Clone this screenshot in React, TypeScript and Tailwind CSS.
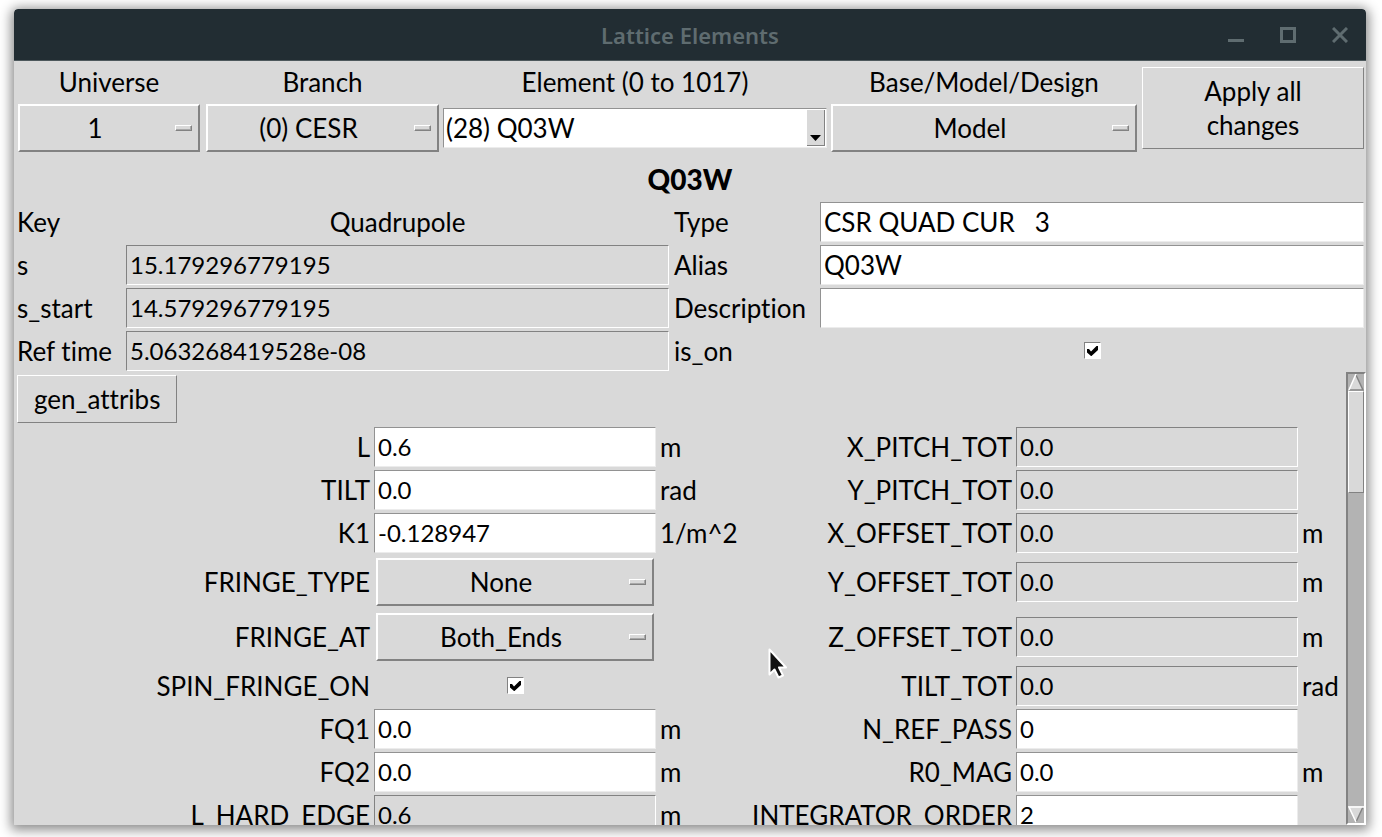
import React from "react";

type Field = {
  name: string;
  value?: string;
  unit?: string;
  kind?: "edit" | "fixed" | "menu" | "check";
};

const leftFields: Field[] = [
  { name: "L", value: "0.6", unit: "m" },
  { name: "TILT", value: "0.0", unit: "rad" },
  { name: "K1", value: "-0.128947", unit: "1/m^2" },
  { name: "FRINGE_TYPE", value: "None", kind: "menu" },
  { name: "FRINGE_AT", value: "Both_Ends", kind: "menu" },
  { name: "SPIN_FRINGE_ON", kind: "check" },
  { name: "FQ1", value: "0.0", unit: "m" },
  { name: "FQ2", value: "0.0", unit: "m" },
  { name: "L_HARD_EDGE", value: "0.6", unit: "m", kind: "fixed" },
];

const rightFields: Field[] = [
  { name: "X_PITCH_TOT", value: "0.0", kind: "fixed" },
  { name: "Y_PITCH_TOT", value: "0.0", kind: "fixed" },
  { name: "X_OFFSET_TOT", value: "0.0", unit: "m", kind: "fixed" },
  { name: "Y_OFFSET_TOT", value: "0.0", unit: "m", kind: "fixed" },
  { name: "Z_OFFSET_TOT", value: "0.0", unit: "m", kind: "fixed" },
  { name: "TILT_TOT", value: "0.0", unit: "rad", kind: "fixed" },
  { name: "N_REF_PASS", value: "0" },
  { name: "R0_MAG", value: "0.0", unit: "m" },
  { name: "INTEGRATOR_ORDER", value: "2" },
];

function Entry({
  id,
  value,
  fixed,
  text,
}: {
  id: string;
  value: string;
  fixed?: boolean;
  text?: boolean;
}) {
  return (
    <input
      id={id}
      type="text"
      defaultValue={value}
      readOnly={fixed}
      className={
        "h-10 w-full min-w-0 rounded-none border px-[3px] outline-none " +
        (text ? "text-[26px] " : "text-2xl ") +
        (fixed
          ? "border-t-[#828282] border-r-white border-b-white border-l-[#828282] bg-[#d9d9d9]"
          : "border-t-[#929292] border-r-[#ececec] border-b-[#ececec] border-l-[#929292] bg-white")
      }
    />
  );
}

function OptionMenu({ id, value }: { id: string; value: string }) {
  return (
    <div className="relative w-full">
      <select
        id={id}
        defaultValue={value}
        className="h-12 w-full appearance-none rounded-none border-2 border-t-white border-r-[#828282] border-b-[#828282] border-l-white bg-[#d9d9d9] pr-7 text-center outline-none [text-align-last:center]"
      >
        <option>{value}</option>
      </select>
      <span className="pointer-events-none absolute inset-y-0 right-2 flex items-center">
        <span className="h-1.5 w-[17px] border border-t-white border-r-[#828282] border-b-[#828282] border-l-white bg-[#d9d9d9] shadow-[inset_-1px_-1px_0_#a8a8a8]" />
      </span>
    </div>
  );
}

function Check({ id }: { id: string }) {
  return (
    <div className="relative size-[17px] justify-self-center">
      <input
        id={id}
        type="checkbox"
        defaultChecked
        className="peer block size-[17px] appearance-none border border-t-[#828282] border-r-white border-b-white border-l-[#828282] bg-white"
      />
      <svg
        viewBox="0 0 17 17"
        className="pointer-events-none absolute inset-0 hidden peer-checked:block"
        aria-hidden="true"
      >
        <path d="M3 7h2l2 2.500L12.500 4H14v4l-6.500 6H7L3 10.500z" fill="#000" />
      </svg>
    </div>
  );
}

function Control({ field }: { field: Field }) {
  if (field.kind === "menu") return <OptionMenu id={field.name} value={field.value ?? ""} />;
  if (field.kind === "check") return <Check id={field.name} />;
  return <Entry id={field.name} value={field.value ?? ""} fixed={field.kind === "fixed"} />;
}

function AttributeRow({ left, right }: { left: Field; right: Field }) {
  return (
    <div
      className={
        "grid grid-cols-[360fr_282fr_86fr_274fr_282fr_48fr] items-center " +
        (left.kind === "menu" ? "h-[55px]" : "h-[43px]")
      }
    >
      <label htmlFor={left.name} className="justify-self-end pr-1 whitespace-nowrap">
        {left.name}
      </label>
      <div className={left.kind === "menu" ? "grid px-0.5" : "grid"}>
        <Control field={left} />
      </div>
      <span className="pl-1">{left.unit}</span>
      <label htmlFor={right.name} className="justify-self-end pr-1 whitespace-nowrap">
        {right.name}
      </label>
      <Control field={right} />
      <span className="pl-1">{right.unit}</span>
    </div>
  );
}

function TitleBar() {
  return (
    <header className="grid h-[52px] shrink-0 grid-cols-[1fr_auto_1fr] items-center rounded-t-sm border-b border-[#4d585c] bg-[#222d33] text-[#5f6c70]">
      <span />
      <h1 className="font-['Noto_Sans'] text-[22px] leading-8 font-semibold">Lattice Elements</h1>
      <div className="flex justify-end gap-9 pr-[18px]">
        <button aria-label="Minimize" className="size-4">
          <svg viewBox="0 0 16 16"><path d="M0 12h16v3H0z" fill="currentColor" /></svg>
        </button>
        <button aria-label="Maximize" className="size-4">
          <svg viewBox="0 0 16 16">
            <path d="M1.500 1.500h13v13h-13z" fill="none" stroke="currentColor" strokeWidth="3" />
          </svg>
        </button>
        <button aria-label="Close" className="size-4">
          <svg viewBox="0 0 16 16">
            <path d="M1 1l14 14M15 1L1 15" stroke="currentColor" strokeWidth="3" />
          </svg>
        </button>
      </div>
    </header>
  );
}

function ScrollBar() {
  return (
    <div className="flex w-5 shrink-0 flex-col border-2 border-t-[#828282] border-r-white border-b-white border-l-[#828282] bg-[#b3b3b3]">
      <button aria-label="Scroll up" className="h-[17px] w-4">
        <svg viewBox="0 0 16 17">
          <path d="M8 0L16 17H0z" fill="#d9d9d9" />
          <path d="M8 1l7 15H1" fill="none" stroke="#828282" strokeWidth="1.500" />
          <path d="M8 0L1 16" stroke="#fff" strokeWidth="1.500" />
        </svg>
      </button>
      <div className="h-[102px] border border-t-white border-r-[#828282] border-b-[#828282] border-l-white bg-[#d9d9d9]" />
      <button aria-label="Scroll down" className="mt-auto h-[17px] w-4">
        <svg viewBox="0 0 16 17">
          <path d="M0 0h16L8 17z" fill="#d9d9d9" />
          <path d="M15 1L8 16" stroke="#828282" strokeWidth="1.500" />
          <path d="M8 16L1 1h15" fill="none" stroke="#fff" strokeWidth="1.500" />
        </svg>
      </button>
    </div>
  );
}

export default function App() {
  return (
    <div className="h-screen bg-white pt-[9px] pr-4 pb-3 pl-3.5">
      <main className="relative flex h-full flex-col overflow-clip rounded-t-sm bg-[#d9d9d9] font-['Lato',sans-serif] text-[26px] leading-8 text-black shadow-[0_2px_12px_3px_rgba(0,0,0,0.45)] [font-variant-ligatures:none]">
        <TitleBar />

        <section className="grid shrink-0 grid-cols-[190fr_237fr_388fr_310fr_227fr] grid-rows-[41px_51px] items-center">
          <label htmlFor="universe" className="justify-self-center">Universe</label>
          <label htmlFor="branch" className="justify-self-center">Branch</label>
          <label htmlFor="element" className="justify-self-center">Element (0 to 1017)</label>
          <label htmlFor="source" className="justify-self-center">Base/Model/Design</label>
          <div className="row-span-2 grid pt-px pr-0.5 pl-[3px]">
            <button className="h-[82px] border border-t-white border-r-[#828282] border-b-[#828282] border-l-white px-10 leading-[34px]">
              Apply all changes
            </button>
          </div>
          <div className="px-1"><OptionMenu id="universe" value="1" /></div>
          <div className="px-0.5"><OptionMenu id="branch" value="(0) CESR" /></div>
          <div className="px-0.5">
            <div className="flex h-10 border border-t-[#929292] border-r-[#ececec] border-b-[#ececec] border-l-[#929292] bg-white p-px">
              <input
                id="element"
                type="text"
                defaultValue="(28) Q03W"
                className="min-w-0 flex-1 px-px outline-none"
              />
              <button
                aria-label="Show elements"
                className="flex w-[18px] items-end justify-center border-r border-b border-[#828282] bg-[#d9d9d9] pb-1"
              >
                <svg viewBox="0 0 11 6" className="h-1.5 w-[11px]"><path d="M0 0h11L5.500 6z" fill="#000" /></svg>
              </button>
            </div>
          </div>
          <div className="px-0.5"><OptionMenu id="source" value="Model" /></div>
        </section>

        <h2 className="flex h-[47px] shrink-0 items-center justify-center pt-1 text-[28px] font-black">Q03W</h2>

        <section className="grid shrink-0 auto-rows-[43px] grid-cols-[112fr_543fr_151fr_544fr] items-center pr-0.5">
          <span className="pl-[3px]">Key</span>
          <span className="justify-self-center">Quadrupole</span>
          <label htmlFor="type" className="pl-[5px]">Type</label>
          <Entry id="type" value="CSR QUAD CUR   3" text />
          <label htmlFor="s" className="pl-[3px]">s</label>
          <Entry id="s" value="15.179296779195" fixed />
          <label htmlFor="alias" className="pl-[5px]">Alias</label>
          <Entry id="alias" value="Q03W" text />
          <label htmlFor="s_start" className="pl-[3px]">s_start</label>
          <Entry id="s_start" value="14.579296779195" fixed />
          <label htmlFor="description" className="pl-[5px]">Description</label>
          <Entry id="description" value="" text />
          <label htmlFor="ref_time" className="pl-[3px] whitespace-nowrap">Ref time</label>
          <Entry id="ref_time" value="5.063268419528e-08" fixed />
          <label htmlFor="is_on" className="pl-[5px]">is_on</label>
          <Check id="is_on" />
        </section>

        <section className="flex min-h-0 flex-1">
          <div className="min-w-0 flex-1 overflow-hidden">
            <div className="flex h-[53px] items-center pt-px pl-[3px]">
              <button className="h-12 border border-t-white border-r-[#828282] border-b-[#828282] border-l-white px-4">
                gen_attribs
              </button>
            </div>
            {leftFields.map((left, i) => (
              <AttributeRow key={left.name} left={left} right={rightFields[i]} />
            ))}
          </div>
          <ScrollBar />
        </section>

        <svg
          viewBox="0 0 20 31"
          className="pointer-events-none absolute top-[639px] left-[754px] h-[31px] w-5"
          aria-hidden="true"
        >
          <path
            d="M1.500 1.500v25l5-5 4 8 4.500-2-4-8h7z"
            fill="#111"
            stroke="#fff"
            strokeWidth="2"
            strokeLinejoin="round"
          />
        </svg>
      </main>
    </div>
  );
}
